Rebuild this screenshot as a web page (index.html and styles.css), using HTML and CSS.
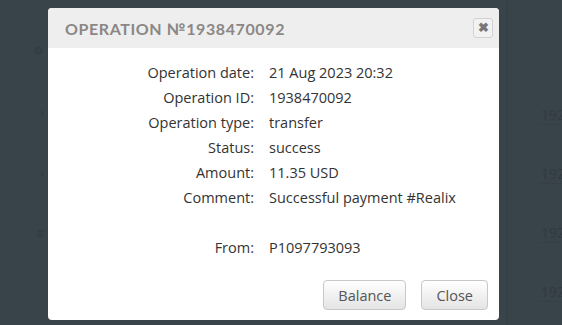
FILE: index.html
```html
<!DOCTYPE html>
<html>
<head>
  <link rel="stylesheet" href="styles.css">
</head>
<body>
  <!-- page behind the dialog -->
  <div class="page">
    <div class="side">
      <span class="side-icon">&#9881;</span>
      <span class="side-icon">&#8250;</span>
      <span class="side-icon">&#8250;</span>
      <span class="side-icon">#</span>
    </div>
    <div class="rows">
      <div class="row"><span class="num">192</span></div>
      <div class="row"><span class="num">192</span></div>
      <div class="row"><span class="num">192</span></div>
      <div class="row"><span class="num">192</span></div>
    </div>
  </div>

  <div class="modal">
    <div class="modal-header">
      <h3 class="modal-title">Operation №1938470092</h3>
      <button type="button" class="btn-x">&#10006;</button>
    </div>

    <div class="modal-body">
      <div class="info">
        <span class="label">Operation date:</span><span class="value">21 Aug 2023 20:32</span>
        <span class="label">Operation ID:</span><span class="value">1938470092</span>
        <span class="label">Operation type:</span><span class="value">transfer</span>
        <span class="label">Status:</span><span class="value">success</span>
        <span class="label">Amount:</span><span class="value">11.35 USD</span>
        <span class="label">Comment:</span><span class="value">Successful payment #Realix</span>
        <span class="label"></span><span class="value"></span>
        <span class="label">From:</span><span class="value">P1097793093</span>
      </div>
    </div>

    <div class="modal-footer">
      <button type="button" class="btn">Balance</button>
      <button type="button" class="btn">Close</button>
    </div>
  </div>
</body>
</html>
```

FILE: styles.css
```css
body {
  margin: 0;
  background-color: #39434a;
  font-family: "Open Sans", "Liberation Sans", sans-serif;
  overflow: hidden;
}

/* Background page (dimmed) */
.page {
  display: flex;
  height: 325px;
}

.side {
  width: 48px;
  display: flex;
  flex-direction: column;
  align-items: flex-end;
  padding-top: 42px;
  gap: 44px;
}

.side-icon {
  color: #323b41;
  font-size: 12px;
  padding-right: 4px;
}

.rows {
  flex: 1;
  display: flex;
  flex-direction: column;
  align-items: flex-end;
  padding-top: 103px;
  gap: 35px;
  border-left: 1px solid #343e44;
  margin-left: 459px;
}

.row {
  height: 24px;
}

.num {
  display: inline-block;
  color: #303a40;
  font-size: 14px;
  margin-right: -3px;
  border-bottom: 1px dotted #303a40;
}

/* Dialog */
.modal {
  position: absolute;
  top: 8px;
  left: 48px;
  width: 451px;
  height: 312px;
  background: #fff;
  border-radius: 4px;
  display: flex;
  flex-direction: column;
  overflow: hidden;
}

.modal-header {
  height: 40px;
  background: #eeeeee;
  display: flex;
  align-items: center;
  justify-content: space-between;
  padding: 0 6px 0 17px;
}

.modal-title {
  margin: 0;
  font-family: "Lato", sans-serif;
  font-weight: 700;
  font-size: 16px;
  letter-spacing: 0.6px;
  text-transform: uppercase;
  color: #8b8784;
}

.btn-x {
  width: 20px;
  height: 20px;
  padding: 0;
  border: 1px solid #d2d2d2;
  border-radius: 3px;
  background: #f2f2f2;
  color: #777;
  font-size: 13px;
  font-weight: bold;
  line-height: 18px;
  cursor: pointer;
}

.modal-body {
  flex: 1;
  padding-top: 12px;
}

.info {
  display: grid;
  grid-template-columns: 206px 1fr;
  column-gap: 15px;
  grid-auto-rows: 25px;
  align-items: center;
  font-size: 14.5px;
  color: #333;
}

.label {
  text-align: right;
}

.modal-footer {
  display: flex;
  justify-content: flex-end;
  gap: 15px;
  padding: 0 11px 10px 0;
}

.btn {
  height: 30px;
  padding: 0 14px;
  font-family: "Open Sans", sans-serif;
  font-size: 14.5px;
  color: #555;
  background: linear-gradient(#ffffff, #e4e4e4);
  border: 1px solid #c8c8c8;
  border-radius: 4px;
  cursor: pointer;
}
```
